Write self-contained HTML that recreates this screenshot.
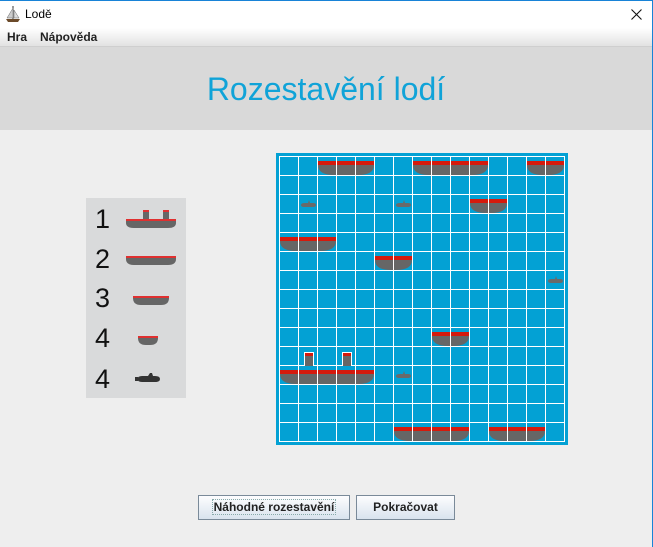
<!DOCTYPE html>
<html><head><meta charset="utf-8"><style>
*{margin:0;padding:0;box-sizing:border-box}
body{width:653px;height:547px;overflow:hidden;background:#eeeeee;font-family:"Liberation Sans",sans-serif;position:relative}
#tb{position:absolute;left:0;top:0;width:653px;height:28px;background:#fff;border-right:1px solid #1883d7;border-top:1px solid #1883d7}
#tb span{position:absolute;left:25px;top:6px;font-size:12px;color:#000}
#mb{position:absolute;left:0;top:28px;width:653px;height:19px;background:linear-gradient(#fff,#e2e2e2);border-bottom:1px solid #cfcfcf;border-right:1px solid #1883d7}
#mb span{position:absolute;top:2px;font-size:12px;font-weight:bold;color:#222}
#hd{position:absolute;left:0;top:47px;width:652px;height:83px;background:#d9d9d9}
#hd div{position:absolute;left:0;width:652px;top:24px;text-align:center;font-size:32px;color:#10a3d8}
#lp{position:absolute;left:86px;top:198px;width:100px;height:200px;background:#d9dadb}
.n{position:absolute;left:9px;font-size:27px;color:#111}
.btn{position:absolute;top:495px;height:25px;border:1px solid #7a8a99;background:linear-gradient(#fdfdfe,#d9e3ee);font-size:12px;font-weight:bold;color:#222;text-align:center;line-height:23px}
#rb{position:absolute;right:0;top:0;width:1px;height:547px;background:#1883d7}
</style></head><body>
<div id="tb">
<svg style="position:absolute;left:4px;top:4px" width="18" height="18" viewBox="0 0 18 18"><path d="M9 1V14" stroke="#333"/><path d="M9 3L3 13H9Z" fill="#ccc" stroke="#666" stroke-width=".5"/><path d="M10 5L15 13H10Z" fill="#ddd" stroke="#666" stroke-width=".5"/><path d="M2 14H16L14 17H4Z" fill="#6b4a2a"/></svg>
<span>Lodě</span>
<svg style="position:absolute;left:631px;top:8px" width="11" height="11"><path d="M0.5 0.5L10.5 10.5M10.5 0.5L0.5 10.5" stroke="#111" stroke-width="1.1"/></svg>
</div>
<div id="mb"><span style="left:7px">Hra</span><span style="left:40px">Nápověda</span></div>
<div id="hd"><div>Rozestavění lodí</div></div>
<div id="lp">
<div class="n" style="top:6px">1</div><div class="n" style="top:46px">2</div><div class="n" style="top:85px">3</div><div class="n" style="top:125px">4</div><div class="n" style="top:166px">4</div>
<svg style="position:absolute;left:0;top:0" width="100" height="200">
<rect x="57" y="12" width="6" height="10" fill="#666"/><rect x="57" y="12" width="6" height="2" fill="#e03030"/>
<rect x="77" y="12" width="6" height="10" fill="#666"/><rect x="77" y="12" width="6" height="2" fill="#e03030"/>
<path d="M40 21H90V25Q90 30 82 30H48Q40 30 40 25Z" fill="#666"/><rect x="40" y="21" width="50" height="2" fill="#e03030"/>
<path d="M40 58H90V61Q90 67 82 67H48Q40 67 40 61Z" fill="#666"/><rect x="40" y="58" width="50" height="2" fill="#e03030"/>
<path d="M47 98H83V100Q83 107 75 107H55Q47 107 47 100Z" fill="#666"/><rect x="47" y="98" width="36" height="2" fill="#e03030"/>
<path d="M52 138H72V140Q72 147 64 147H60Q52 147 52 140Z" fill="#666"/><rect x="52" y="138" width="20" height="2" fill="#e03030"/>
<path d="M51 181Q52 178 56 178H62L64 175H66L67 178H69Q74 178 74 181Q74 184 69 184H56Q52 184 51 181Z" fill="#333"/><rect x="49" y="179" width="3" height="4" fill="#333"/>
</svg>
</div>
<svg id="g" style="position:absolute;left:276px;top:153px" width="292" height="292"></svg>
<div class="btn" style="left:198px;width:152px"><span style="border:1px dotted #8aa;padding:0 1px">Náhodné rozestavění</span></div>
<div class="btn" style="left:356px;width:99px">Pokračovat</div>
<div id="rb"></div>
<script>
var s='<rect width="292" height="292" fill="#03a1d4"/><rect x="3" y="3" width="286" height="286" fill="#fff"/>';
for(var r=0;r<15;r++)for(var c=0;c<15;c++)s+='<rect x="'+(4+c*19)+'" y="'+(4+r*19)+'" width="18" height="18" fill="#03a1d4"/>';
function ship(r,c0,n){var x=4+c0*19,y=4+r*19,w=n*19-1;
s+='<path d="M'+x+' '+(y+8)+'H'+(x+w)+'Q'+(x+w)+' '+(y+18)+' '+(x+w-16)+' '+(y+18)+'H'+(x+16)+'Q'+x+' '+(y+18)+' '+x+' '+(y+8)+'Z" fill="#666"/>';
s+='<rect x="'+x+'" y="'+(y+4)+'" width="'+w+'" height="4" fill="#d51a0c"/>';
for(var i=1;i<n;i++)s+='<rect x="'+(x+i*19-1)+'" y="'+y+'" width="1" height="18" fill="#fff"/>';}
function sub(r,c){var x=4+c*19,y=4+r*19;s+='<path d="M'+(x+2)+' '+(y+10)+'Q'+(x+2)+' '+(y+8)+' '+(x+6)+' '+(y+8)+'H'+(x+9)+'L'+(x+10)+' '+(y+5)+'L'+(x+11)+' '+(y+8)+'H'+(x+14)+'Q'+(x+17)+' '+(y+8)+' '+(x+17)+' '+(y+10)+'Q'+(x+17)+' '+(y+12)+' '+(x+14)+' '+(y+12)+'H'+(x+5)+'Q'+(x+2)+' '+(y+12)+' '+(x+2)+' '+(y+10)+'Z" fill="#6a6a6a"/>';}
ship(0,2,3);ship(0,7,4);ship(0,13,2);ship(2,10,2);ship(4,0,3);ship(5,5,2);ship(9,8,2);ship(11,0,5);ship(14,6,4);ship(14,11,3);
sub(2,1);sub(2,6);sub(6,14);sub(11,6);
[1,3].forEach(function(c){var x=4+c*19+5,y=4+10*19+5;s+='<rect x="'+x+'" y="'+y+'" width="10" height="14" fill="#fff"/><rect x="'+(x+1)+'" y="'+(y+1)+'" width="8" height="13" fill="#666"/><rect x="'+(x+1)+'" y="'+(y+1)+'" width="8" height="3" fill="#d51a0c"/>';});
document.getElementById('g').innerHTML=s;
</script>
</body></html>
